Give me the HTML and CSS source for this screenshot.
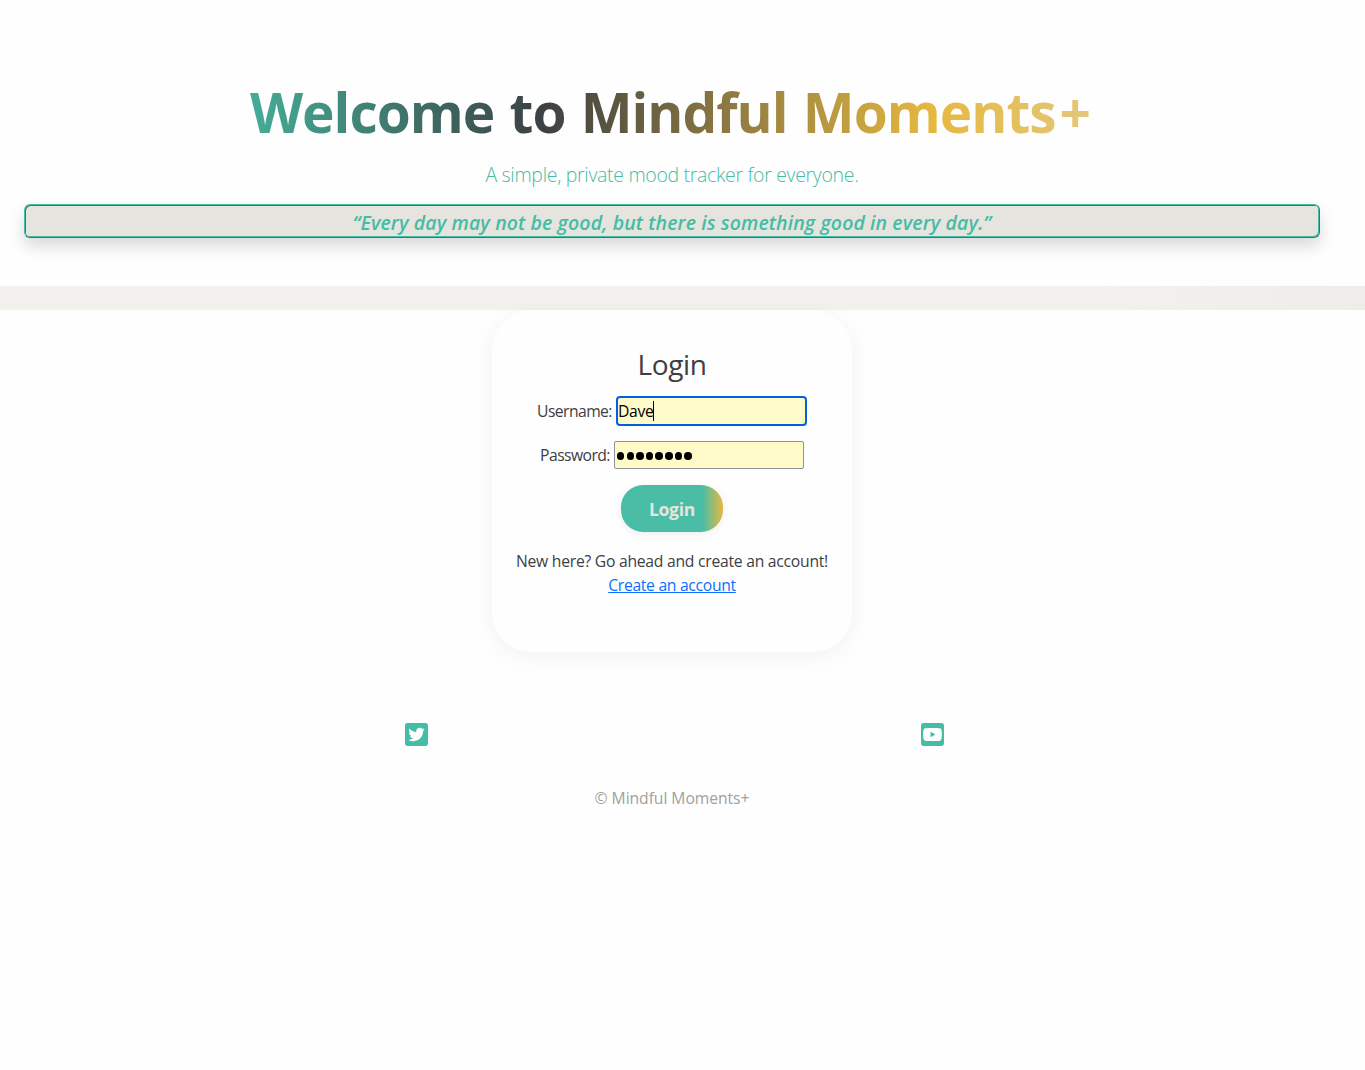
FILE: index.html
```html
<!DOCTYPE html>
<html lang="en">
<head>
<meta charset="utf-8">
<title>Mindful Moments+</title>
<link rel="stylesheet" href="styles.css">
</head>
<body>
<header class="hero">
  <h1 class="hero-title">Welcome to Mindful Moments<span class="plus">+</span></h1>
  <p class="tagline">A simple, private mood tracker for everyone.</p>
  <p class="quote">“Every day may not be good, but there is something good in every day.”</p>
</header>
<div class="band"></div>
<main class="content">
  <form class="card">
    <h2 class="card-title">Login</h2>
    <div class="field"><label for="username">Username:</label><span class="input focused" id="username">Dave<i class="caret"></i></span></div>
    <div class="field"><label for="password">Password:</label><span class="input" id="password"><i class="dot"></i><i class="dot"></i><i class="dot"></i><i class="dot"></i><i class="dot"></i><i class="dot"></i><i class="dot"></i><i class="dot"></i></span></div>
    <button class="login" type="button">Login</button>
    <p class="hint">New here? Go ahead and create an account!</p>
    <a class="create" href="#">Create an account</a>
  </form>
</main>
<footer class="footer">
  <div class="social">
    <svg viewBox="0 32 448 448" width="23" height="23"><path d="M400 32H48C21.500 32 0 53.500 0 80v352c0 26.500 21.500 48 48 48h352c26.500 0 48-21.500 48-48V80c0-26.500-21.500-48-48-48zm-48.900 158.800c.2 2.800.2 5.700.2 8.500 0 86.700-66 186.600-186.600 186.600-37.200 0-71.700-10.800-100.700-29.400 5.300.6 10.400.8 15.800.8 30.700 0 58.900-10.400 81.400-28-28.800-.6-53-19.500-61.300-45.500 10.100 1.500 19.200 1.500 29.600-1.200-30-6.100-52.500-32.500-52.500-64.400v-.8c8.700 4.900 18.900 7.900 29.600 8.300a65.447 65.447 0 0 1-29.200-54.600c0-12.200 3.200-23.400 8.900-33.100 32.300 39.800 80.800 65.800 135.200 68.600-9.300-44.500 24-80.600 64-80.600 18.900 0 35.900 7.900 47.900 20.700 14.800-2.800 29-8.300 41.600-15.800-4.900 15.200-15.200 28-28.800 36.100 13.200-1.400 26-5.100 37.800-10.200-8.900 13.100-20.100 24.700-32.900 34z"/></svg>
    <svg viewBox="0 32 448 448" width="23" height="23"><path d="M186.800 202.100l95.200 54.100-95.200 54.100V202.100zM448 80v352c0 26.500-21.500 48-48 48H48c-26.500 0-48-21.500-48-48V80c0-26.500 21.500-48 48-48h352c26.500 0 48 21.500 48 48zm-42 176.300s0-59.600-7.600-88.200c-4.200-15.800-16.500-28.200-32.200-32.400C337.900 128 224 128 224 128s-113.900 0-142.200 7.700c-15.700 4.200-28 16.600-32.200 32.400-7.600 28.500-7.600 88.200-7.600 88.200s0 59.600 7.600 88.200c4.200 15.800 16.500 27.700 32.200 31.900C110.100 384 224 384 224 384s113.900 0 142.200-7.700c15.700-4.200 28-16.100 32.200-31.900 7.600-28.500 7.600-88.100 7.600-88.100z"/></svg>
  </div>
  <p class="copyright">© Mindful Moments+</p>
</footer>
</body>
</html>
```
FILE: styles.css
```css
* { box-sizing: border-box; }
body {
  margin: 0;
  background: #fefefe;
  color: #3c4043;
  font-family: "Open Sans", "Noto Sans", sans-serif;
  font-size: 15.700px;
  line-height: 24px;
}
h1, h2, p { margin: 0; font-weight: 400; }
.hero {
  width: 1344px;
  height: 286px;
  padding: 78px 24px 0;
  text-align: center;
}
.hero-title {
  height: 67px;
  padding-right: 4px;
  font-size: 55px;
  line-height: 67px;
  font-weight: 700;
  letter-spacing: -1px;
  word-spacing: 2px;
  white-space: nowrap;
  color: transparent;
  background: linear-gradient(90deg, #45b8a0 15%, #3c4043 40%, #e6b83f 70%, #dfdcd0 100%);
  -webkit-background-clip: text;
  background-clip: text;
}
.plus { margin-left: 4px; }
.tagline {
  height: 30px;
  margin-top: 15px;
  color: #45bca4;
  font-size: 19.500px;
  line-height: 30px;
  font-weight: 300;
  letter-spacing: -.32px;
}
.quote {
  height: 34px;
  margin-top: 14px;
  padding-top: 1px;
  border: 1px solid;
  border-color: #45bca4 #2a8073 #2a8073 #45bca4;
  border-radius: 6px;
  background: #e5e4df;
  box-shadow: inset 1px 1px #2a8073, inset -1px -1px #45bca4, 0 8px 16px rgba(0, 0, 0, .15);
  color: #45bca4;
  font-size: 19.500px;
  line-height: 33px;
  font-style: italic;
  font-weight: 600;
  letter-spacing: .1px;
}
.band {
  height: 24px;
  background: linear-gradient(90deg, #f2f1ed 80%, #eeede9 100%);
}
.content { display: flex; justify-content: center; width: 1344px; }
.card {
  display: flex;
  flex-direction: column;
  align-items: center;
  width: 360px;
  height: 342px;
  padding-top: 37px;
  border-radius: 40px;
  background: #fefefe;
  box-shadow: 0 4px 24px rgba(0, 0, 0, .05);
  white-space: nowrap;
}
.card-title { height: 34px; margin-bottom: 15px; font-size: 28px; line-height: 34px; letter-spacing: -.4px; }
.field { display: flex; align-items: center; gap: 4px; height: 30px; margin-bottom: 14px; letter-spacing: -.56px; }
.field + .field { margin-bottom: 15px; }
.input {
  display: flex;
  align-items: center;
  width: 190px;
  height: 28px;
  padding-left: 2px;
  border: 1px solid #8f8f9d;
  border-radius: 2px;
  background: #fffbc8;
  color: #000;
  letter-spacing: -.3px;
}
.focused { width: 191px; height: 30px; padding-left: 0; border: 2px solid #0060df; border-radius: 4px; }
.caret { width: 1px; height: 20px; background: #000; }
.dot { width: 7.500px; height: 7.500px; margin: 2px 2.150px 0 0; border-radius: 50%; background: #000; }
.login {
  width: 102px;
  height: 47px;
  padding: 0;
  border: 0;
  border-radius: 22px;
  background: linear-gradient(90deg, #4abda6 80%, #e6b83f 100%);
  box-shadow: 0 2px 8px rgba(0, 0, 0, .07);
  color: #e5e4df;
  font: 700 17.600px/24px "Open Sans", "Noto Sans", sans-serif;
  letter-spacing: -.3px;
}
.hint { margin-top: 17px; letter-spacing: -.25px; }
.create { color: #0d6efd; text-decoration: underline; letter-spacing: -.3px; }
.footer { width: 1344px; }
.social {
  display: grid;
  grid-template-columns: 516px 516px;
  justify-items: center;
  margin: 71px 0 0 158px;
  fill: #45bca4;
}
.copyright { margin-top: 40px; color: #a0a0a0; text-align: center; letter-spacing: -.06px; }
```
